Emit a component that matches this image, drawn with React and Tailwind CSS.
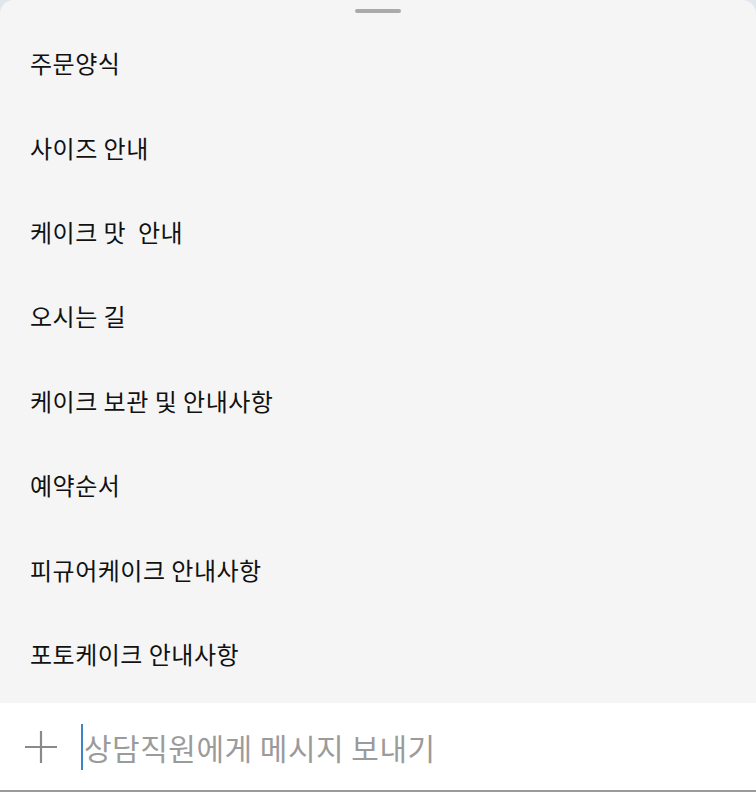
export default function App() {
  const items = [
    "주문양식",
    "사이즈 안내",
    "케이크 맛  안내",
    "오시는 길",
    "케이크 보관 및 안내사항",
    "예약순서",
    "피규어케이크 안내사항",
    "포토케이크 안내사항",
  ];
  return (
    <div
      className="w-[756px] h-[792px] bg-[#dfe7ee] overflow-hidden flex flex-col"
      style={{ fontFamily: '"Noto Sans CJK KR", "Noto Sans", sans-serif' }}
    >
      <div className="flex-1 bg-[#f5f5f5] rounded-t-[14px] flex flex-col">
        <div className="flex justify-center pt-[9px]">
          <div className="w-[46px] h-[4px] rounded-full bg-[#aaaaaa]" />
        </div>
        <div className="flex flex-col pt-[8px]">
          {items.map((t) => (
            <div
              key={t}
              className="h-[84.4px] flex items-center pl-[30px] text-[24px] tracking-[0.5px] text-[#111] whitespace-pre"
            >
              {t}
            </div>
          ))}
        </div>
      </div>
      <div className="h-[89px] shrink-0 bg-white border-b-2 border-[#9a9a9a] flex items-center pl-[24px]">
        <svg width="34" height="34" viewBox="0 0 34 34" className="shrink-0">
          <path d="M17 1v32M1 17h32" stroke="#8a8a8a" strokeWidth="2.2" fill="none" />
        </svg>
        <div className="ml-[23px] w-[2px] h-[46px] bg-[#3d86c6]" />
        <div className="text-[30px] tracking-[0.5px] text-[#9b9b9b] ml-[1px] leading-none">상담직원에게 메시지 보내기</div>
      </div>
    </div>
  );
}
